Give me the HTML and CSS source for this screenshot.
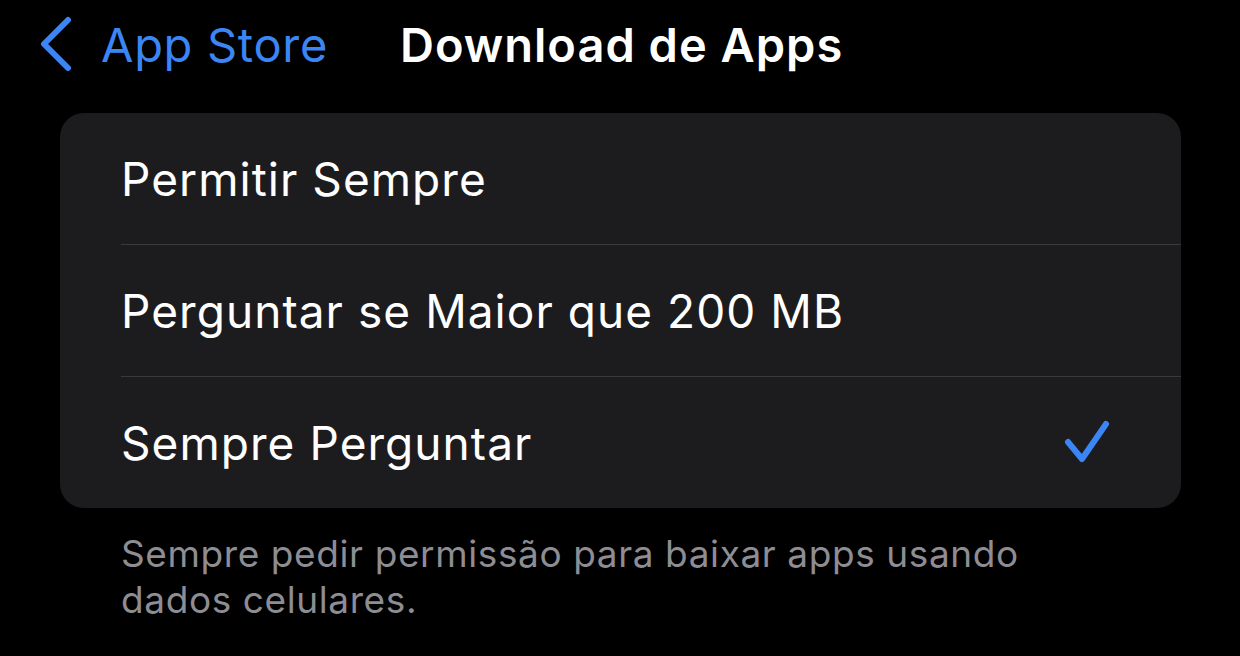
FILE: index.html
```html
<!DOCTYPE html>
<html>
<head>
  <title>Download de Apps</title>
  <link rel="stylesheet" href="styles.css">
</head>
<body>
<div class="nav">
  <div class="back">
    <svg class="chevron" width="34" height="56" viewBox="0 0 34 56">
      <path d="M29 4 L5 28 L29 52" fill="none" stroke="#3b86f4" stroke-width="6" stroke-linecap="round" stroke-linejoin="round"/>
    </svg>
    <span class="back-text">App Store</span>
  </div>
  <div class="title">Download de Apps</div>
</div>

<div class="card">
  <div class="row"><span class="label">Permitir Sempre</span></div>
  <div class="row"><span class="label">Perguntar se Maior que 200 MB</span></div>
  <div class="row">
    <span class="label">Sempre Perguntar</span>
    <svg class="check" width="50" height="50" viewBox="0 0 50 50">
      <path d="M7 24 L21 41 L45 6" fill="none" stroke="#3b86f4" stroke-width="6" stroke-linecap="round" stroke-linejoin="round"/>
    </svg>
  </div>
</div>

<p class="footer">Sempre pedir permissão para baixar apps usando<br>dados celulares.</p>
</body>
</html>
```

FILE: styles.css
```css
body {
  margin: 0;
  background: #000;
  font-family: Inter, "Noto Sans", sans-serif;
  color: #fff;
}
.nav {
  display: flex;
  align-items: center;
  height: 88px;
  padding-left: 39px;
}
.back {
  display: flex;
  align-items: center;
  gap: 28px;
  width: 361px;
}
.chevron {
  display: block;
}
.back-text {
  font-size: 47px;
  letter-spacing: 0.7px;
  color: #3b86f4;
}
.title {
  font-size: 47px;
  font-weight: 600;
  letter-spacing: 1px;
}
.card {
  margin: 25px 59px 0 60px;
  background: #1c1c1e;
  border-radius: 24px;
  overflow: hidden;
}
.row {
  display: flex;
  align-items: center;
  justify-content: space-between;
  height: 131px;
  margin-left: 61px;
  padding-right: 70px;
  border-bottom: 1px solid #3a3a3c;
}
.row:last-child {
  border-bottom: none;
}
.label {
  font-size: 46px;
  letter-spacing: 1.05px;
}
.check {
  display: block;
}
.footer {
  margin: 23px 0 0 121px;
  font-size: 37px;
  line-height: 46px;
  letter-spacing: 0.6px;
  color: #8d8d93;
}
```
